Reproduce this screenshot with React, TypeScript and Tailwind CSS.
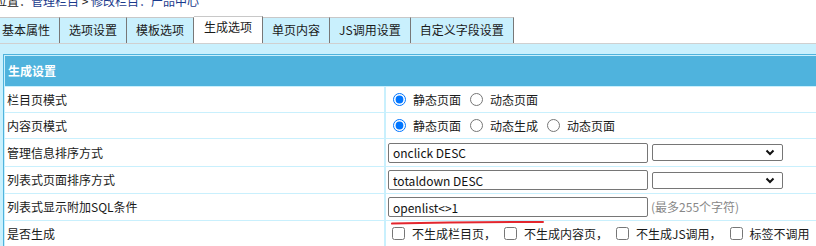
import { ReactNode } from "react";

const tabs = ["基本属性", "选项设置", "模板选项", "生成选项", "单页内容", "JS调用设置", "自定义字段设置"];

function Radio({ checked, name, label }: { checked?: boolean; name: string; label: string }) {
  return (
    <label className="mr-[9px] flex shrink-0 items-center whitespace-nowrap">
      <input type="radio" name={name} defaultChecked={checked} className="m-0 mr-[7px] h-[13px] w-[13px]" />
      <span>{label}</span>
    </label>
  );
}

function Check({ label }: { label: string }) {
  return (
    <label className="mr-[8px] flex shrink-0 items-center whitespace-nowrap">
      <input type="checkbox" className="m-0 mr-[7px] h-[13px] w-[13px]" />
      <span>{label}</span>
    </label>
  );
}

function TextBox({ value }: { value: string }) {
  return (
    <input
      type="text"
      defaultValue={value}
      className="h-[20px] w-[260px] shrink-0 rounded-[2px] border border-[#767676] bg-white px-[4px] text-[12px] text-[#111] outline-none"
    />
  );
}

function SelectBox() {
  return (
    <div className="ml-[4px] flex h-[17px] w-[131px] shrink-0 items-center justify-end rounded-[2px] border border-[#767676] bg-white pr-[7px]">
      <svg width="10" height="7" viewBox="0 0 10 7">
        <path d="M1.5 1.5 L5 5 L8.5 1.5" fill="none" stroke="#111" strokeWidth="2" />
      </svg>
    </div>
  );
}

function Row({ label, h, children }: { label: string; h: string; children: ReactNode }) {
  return (
    <>
      <div className={`flex items-center bg-white pl-[2px] ${h}`}>{label}</div>
      <div className={`flex items-center overflow-hidden whitespace-nowrap bg-white pl-[2px] ${h}`}>{children}</div>
    </>
  );
}

export default function App() {
  return (
    <div className="relative h-[246px] w-[816px] overflow-hidden bg-white font-['Noto_Sans_CJK_SC',sans-serif] text-[12px] leading-[16px] text-[#1a1a1a]">
      <div className="-ml-[5px] -mt-[7px] h-[24px] whitespace-nowrap">
        位置：<span className="text-[#1a3a8c]">管理栏目</span> &gt; <span className="text-[#1a3a8c]">修改栏目：产品中心</span>
      </div>

      <div className="border-b border-[#d0d0d0]">
        <div className="-ml-[7px] flex h-[26px] items-end">
          {tabs.map((t) =>
            t === "生成选项" ? (
              <div key={t} className="flex h-[27px] shrink-0 items-center border-r border-t border-r-[#777] border-t-[#c8c8c8] bg-white px-[10px] pb-[6px]">
                {t}
              </div>
            ) : (
              <div key={t} className="flex h-[26px] shrink-0 items-center border-r border-t border-r-[#777] border-t-[#c8c8c8] bg-[#c9f0fd] px-[9px] pb-[2px]">
                {t}
              </div>
            )
          )}
        </div>
      </div>

      <div className="bg-[#c9f0fd] pl-[3px] pt-[10px]">
        <div className="border-l border-t border-[#4fb3dd] pl-px pt-px">
          <div className="flex h-[30px] items-center bg-[#4fb3dd] pl-[3px] font-bold text-white">生成设置</div>
          <div className="mt-px grid grid-cols-[379px_1fr] gap-x-[2px] gap-y-px">
            <Row label="栏目页模式" h="h-[25px]">
              <div className="ml-[5px] flex">
                <Radio checked name="lm" label="静态页面" />
                <Radio name="lm" label="动态页面" />
              </div>
            </Row>
            <Row label="内容页模式" h="h-[25px]">
              <div className="ml-[5px] flex">
                <Radio checked name="nr" label="静态页面" />
                <Radio name="nr" label="动态生成" />
                <Radio name="nr" label="动态页面" />
              </div>
            </Row>
            <Row label="管理信息排序方式" h="h-[27px]">
              <TextBox value="onclick DESC" />
              <SelectBox />
            </Row>
            <Row label="列表式页面排序方式" h="h-[26px]">
              <TextBox value="totaldown DESC" />
              <SelectBox />
            </Row>
            <Row label="列表式显示附加SQL条件" h="h-[26px]">
              <TextBox value="openlist<>1" />
              <span className="ml-[3px] text-[#888]">(最多255个字符)</span>
            </Row>
            <Row label="是否生成" h="h-[25px]">
              <div className="ml-[4px] flex">
                <Check label="不生成栏目页，" />
                <Check label="不生成内容页，" />
                <Check label="不生成JS调用，" />
                <Check label="标签不调用" />
              </div>
            </Row>
          </div>
        </div>
      </div>

      <svg className="absolute left-0 top-0" width="816" height="246">
        <path d="M392 223.6 Q 460 221.6 543 222" fill="none" stroke="#e3262e" strokeWidth="2" strokeLinecap="round" />
      </svg>
    </div>
  );
}
